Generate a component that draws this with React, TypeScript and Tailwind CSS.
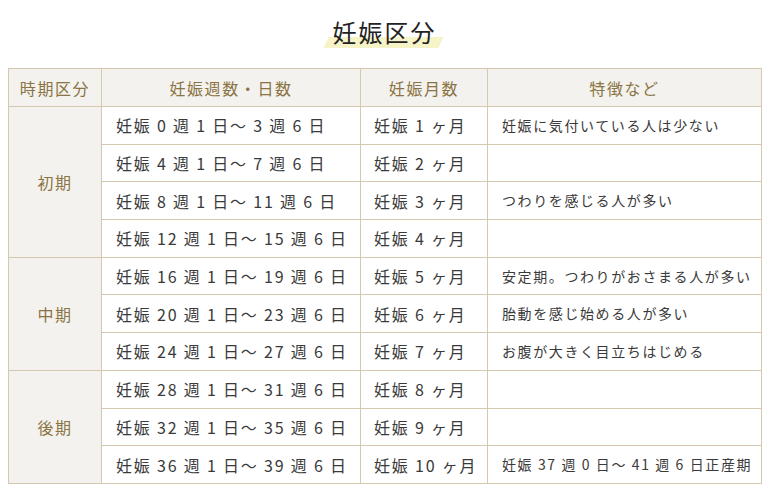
import React from "react";

type Row = { weeks: string; month: string; note: string };

const groups: { label: string; rows: Row[] }[] = [
  {
    label: "初期",
    rows: [
      { weeks: "妊娠 0 週 1 日～ 3 週 6 日", month: "妊娠 1 ヶ月", note: "妊娠に気付いている人は少ない" },
      { weeks: "妊娠 4 週 1 日～ 7 週 6 日", month: "妊娠 2 ヶ月", note: "" },
      { weeks: "妊娠 8 週 1 日～ 11 週 6 日", month: "妊娠 3 ヶ月", note: "つわりを感じる人が多い" },
      { weeks: "妊娠 12 週 1 日～ 15 週 6 日", month: "妊娠 4 ヶ月", note: "" },
    ],
  },
  {
    label: "中期",
    rows: [
      { weeks: "妊娠 16 週 1 日～ 19 週 6 日", month: "妊娠 5 ヶ月", note: "安定期。つわりがおさまる人が多い" },
      { weeks: "妊娠 20 週 1 日～ 23 週 6 日", month: "妊娠 6 ヶ月", note: "胎動を感じ始める人が多い" },
      { weeks: "妊娠 24 週 1 日～ 27 週 6 日", month: "妊娠 7 ヶ月", note: "お腹が大きく目立ちはじめる" },
    ],
  },
  {
    label: "後期",
    rows: [
      { weeks: "妊娠 28 週 1 日～ 31 週 6 日", month: "妊娠 8 ヶ月", note: "" },
      { weeks: "妊娠 32 週 1 日～ 35 週 6 日", month: "妊娠 9 ヶ月", note: "" },
      { weeks: "妊娠 36 週 1 日～ 39 週 6 日", month: "妊娠 10 ヶ月", note: "妊娠 37 週 0 日～ 41 週 6 日正産期" },
    ],
  },
];

export default function App() {
  return (
    <div
      className="w-[768px] h-[492px] bg-white overflow-hidden"
      style={{ fontFamily: '"Noto Sans CJK JP", "Noto Sans", sans-serif' }}
    >
      <div className="flex justify-center pt-[14px] h-[68px]">
        <div className="relative h-[36px]">
          <div className="absolute left-[-6px] right-[-4px] top-[23px] h-[11px] bg-[#f7f3c9] -skew-x-[25deg]" />
          <h1 className="relative text-[24px] leading-[36px] tracking-[2px] text-[#222] pl-[1px]">妊娠区分</h1>
        </div>
      </div>
      <table className="ml-[8px] w-[753px] border-collapse table-fixed text-[#3a3a3a]">
        <colgroup>
          <col className="w-[93px]" />
          <col className="w-[259px]" />
          <col className="w-[127px]" />
          <col className="w-[274px]" />
        </colgroup>
        <thead>
          <tr className="h-[38px] bg-[#f4f2ee] text-[#8a7444] text-[16px] tracking-[0.1em]">
            <th className="border border-[#d6c8af] font-normal text-center p-0">時期区分</th>
            <th className="border border-[#d6c8af] font-normal text-center p-0">妊娠週数・日数</th>
            <th className="border border-[#d6c8af] font-normal text-center p-0">妊娠月数</th>
            <th className="border border-[#d6c8af] font-normal text-center p-0">特徴など</th>
          </tr>
        </thead>
        <tbody>
          {groups.map((g) =>
            g.rows.map((r, i) => (
              <tr key={g.label + i} className="h-[37.7px]">
                {i === 0 && (
                  <td
                    rowSpan={g.rows.length}
                    className="border border-[#d6c8af] bg-[#f4f2ee] text-center text-[16px] tracking-[0.1em] text-[#8a7444] p-0"
                  >
                    {g.label}
                  </td>
                )}
                <td className="border border-[#d6c8af] pl-[14px] p-0 text-[16px] tracking-[1.8px] whitespace-nowrap">
                  {r.weeks}
                </td>
                <td className="border border-[#d6c8af] pl-[13px] p-0 text-[16px] tracking-[1.8px] whitespace-nowrap">
                  {r.month}
                </td>
                <td className="border border-[#d6c8af] pl-[14px] p-0 text-[14px] tracking-[1.6px] whitespace-nowrap">
                  {r.note}
                </td>
              </tr>
            ))
          )}
        </tbody>
      </table>
    </div>
  );
}
